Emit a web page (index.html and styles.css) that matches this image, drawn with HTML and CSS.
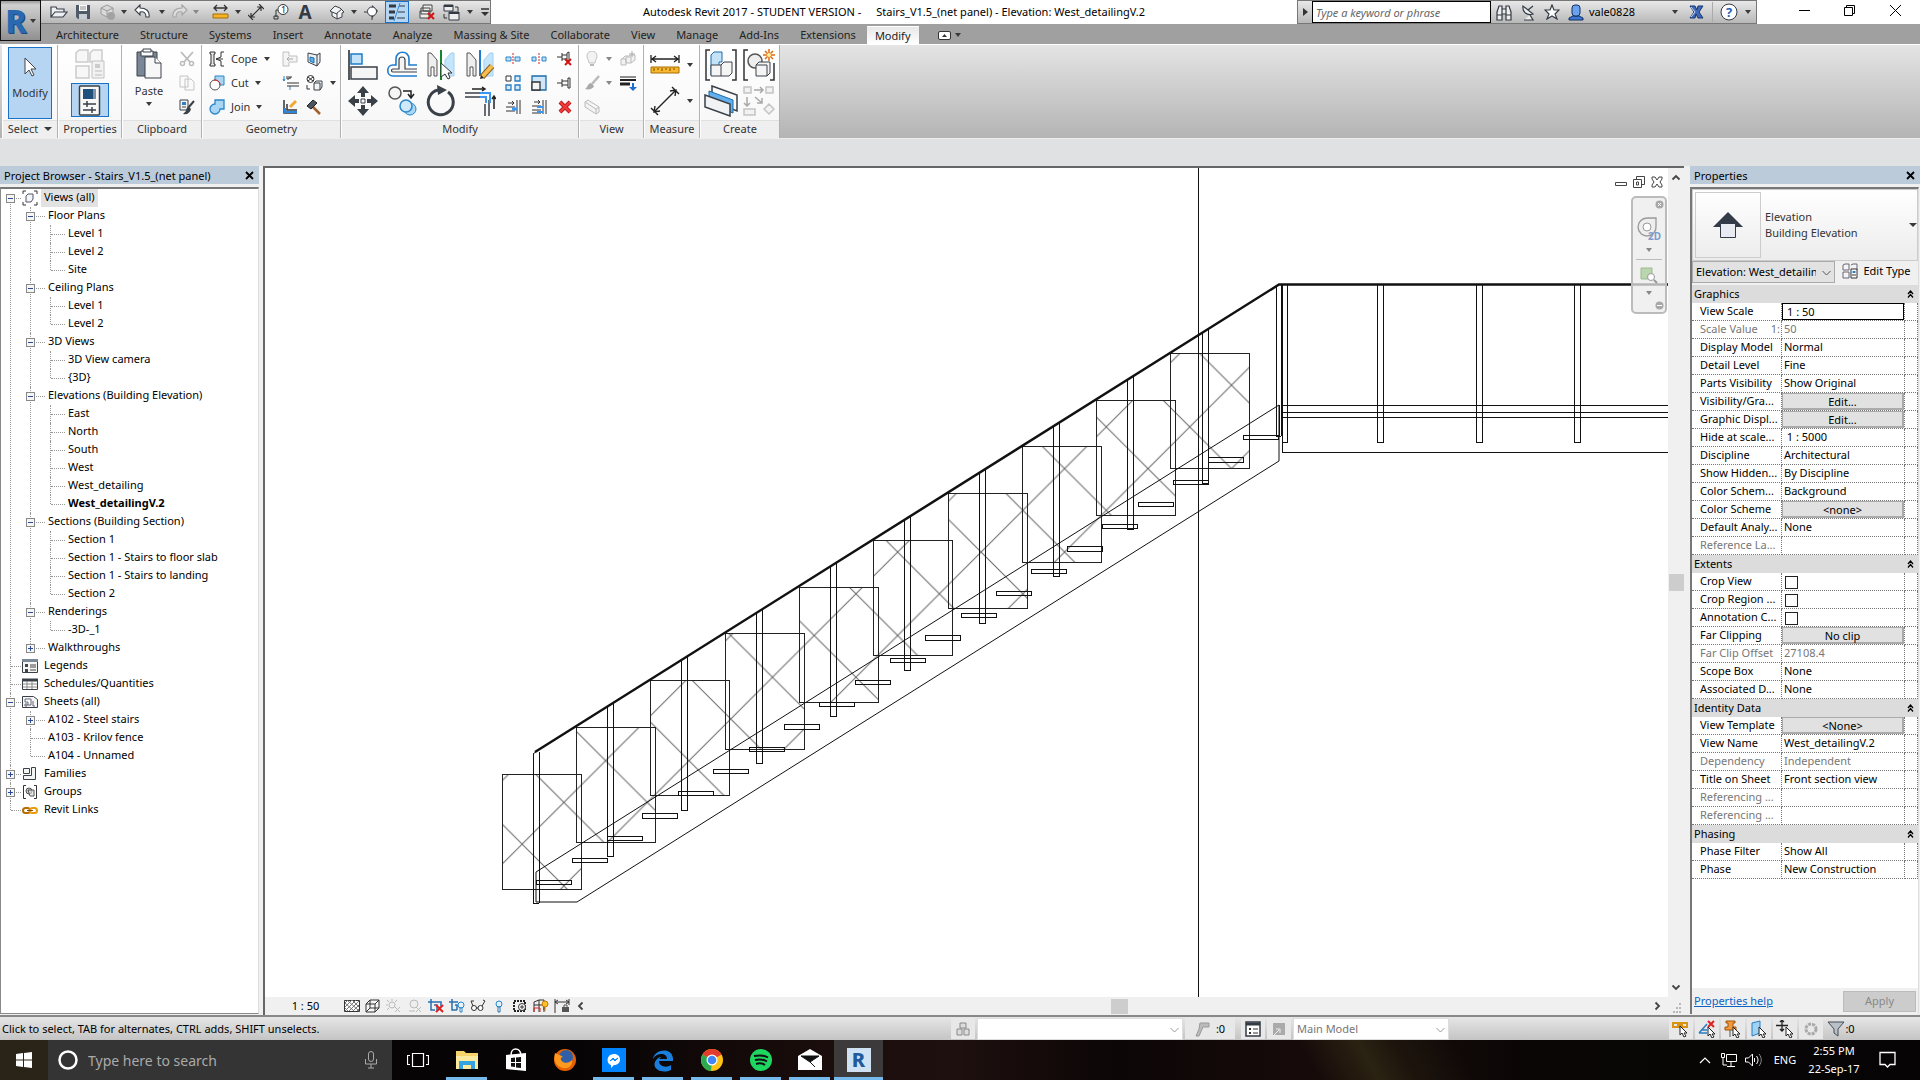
FILE: index.html
```html
<!DOCTYPE html>
<html lang="en">
<head>
<meta charset="utf-8">
<title>Autodesk Revit 2017</title>
<link rel="stylesheet" href="styles.css">
</head>
<body>
<div class="app">
<header class="top">
  <button class="appbtn" aria-label="Application menu"><span class="rlogo">R</span><span class="caret"></span></button>
  <div class="topmain">
    <div class="titlebar">
      <div class="qat">
        <button class="i w24" aria-label="Open"><svg width="18" height="16" viewBox="0 0 18 16"><path d="M1 13V3h5l1 2h7v3M1 13l4-5h12l-4 5z" fill="#eef1f4" stroke="#3a4048" stroke-width="1.2"/></svg></button>
        <button class="i w24" aria-label="Save"><svg width="16" height="16" viewBox="0 0 16 16"><path d="M1 1h14v14H3l-2-2z" fill="#505a68"/><path d="M4 1h8v6H4z" fill="#fff"/><path d="M4 10h8v5H4z" fill="#c7ccd3"/><path d="M5 3h6M5 5h6" stroke="#888"/></svg></button>
        <button class="i w24" aria-label="Synchronize"><svg width="17" height="17" viewBox="0 0 17 17"><path d="M8 1l6 3v6l-6 3-6-3V4zM2 4l6 3 6-3M8 7v6" fill="#d9d9d9" stroke="#9a9a9a"/><circle cx="12" cy="12" r="4" fill="#a2a2a2"/></svg></button>
        <span class="w10"><span class="caret"></span></span>
        <button class="i w28" aria-label="Undo"><svg width="18" height="16" viewBox="0 0 18 16"><path d="M6 1L1 6l5 5V8c4-1 6 1 6 5h3c1-6-3-9-9-9z" fill="#fff" stroke="#3a4048" stroke-width="1.1"/></svg></button>
        <span class="w10"><span class="caret"></span></span>
        <button class="i w24" aria-label="Redo"><svg width="18" height="16" viewBox="0 0 18 16"><path d="M12 1l5 5-5 5V8c-4-1-6 1-6 5H3c-1-6 3-9 9-9z" fill="#ddd" stroke="#a4a4a4" stroke-width="1.1"/></svg></button>
        <span class="w10"><span class="caret dim"></span></span>
        <i class="sep"></i>
        <button class="i w24" aria-label="Measure"><svg width="18" height="16" viewBox="0 0 18 16"><path d="M2 4h13M5 1L2 4l3 3M12 1l3 3-3 3" stroke="#333" fill="none" stroke-width="1.3"/><path d="M1 10h15v4H1z" fill="#f5b32a" stroke="#a86d00"/></svg></button>
        <span class="w10"><span class="caret"></span></span>
        <button class="i w26" aria-label="Aligned dimension"><svg width="16" height="16" viewBox="0 0 16 16"><path d="M3 13L13 3M3 9v4h4M9 3h4v4M0 11l5 5M11 0l5 5" stroke="#333" fill="none" stroke-width="1.2"/></svg></button>
        <button class="i w24" aria-label="Tag"><svg width="16" height="16" viewBox="0 0 16 16"><circle cx="10" cy="5.500" r="5" fill="#fff" stroke="#333"/><path d="M5 6H3v7M1 15h4v-3H1z" fill="none" stroke="#333"/><text x="8" y="9" font-size="9" fill="#222">1</text></svg></button>
        <button class="i w24 bigA" aria-label="Text">A</button>
        <i class="sep"></i>
        <button class="i w24" aria-label="Default 3D view"><svg width="16" height="16" viewBox="0 0 16 16"><path d="M1 7l5-5 5 2 4 4-2 1v4l-5 2-5-3V8z" fill="#f2f2f2" stroke="#3a4048"/><path d="M8 15V9l5-4M3 8l5 2" stroke="#3a4048" fill="none"/></svg></button>
        <span class="w10"><span class="caret"></span></span>
        <button class="i w26" aria-label="Section"><svg width="16" height="16" viewBox="0 0 16 16"><path d="M8 1l6 6-6 7z" fill="#333a44"/><circle cx="8" cy="7.500" r="4.500" fill="#fff" stroke="#333a44"/><path d="M8 12v4M0 8h3" stroke="#333a44"/></svg></button>
        <button class="i w24 on" aria-label="Thin lines"><svg width="18" height="18" viewBox="0 0 18 18"><path d="M1 3h7M1 9h6M1 15h5" stroke="#333a44" stroke-width="3"/><path d="M11 3h6M10 9h7M9 15h8" stroke="#333a44"/><path d="M12 0L6 18" stroke="#2e8bde"/></svg></button>
        <i class="sep"></i>
        <button class="i w20" aria-label="Close hidden windows"><svg width="17" height="16" viewBox="0 0 17 16"><path d="M4 1h9v6H4zM2 4h9v6H2zM1 7h9v7H1z" fill="#eee" stroke="#444"/><path d="M9 9l6 6M15 9l-6 6" stroke="#d21414" stroke-width="2"/></svg></button>
        <button class="i w28" aria-label="Switch windows"><svg width="17" height="17" viewBox="0 0 17 17"><path d="M1 1h9v6H1zM6 8h10v8H6z" fill="#eee" stroke="#333a44"/><path d="M6 9h10M1 2h9" stroke="#333a44" stroke-width="2"/><path d="M12 3h3v4M1 10v4h3" stroke="#333" fill="none"/></svg></button>
        <span class="w10"><span class="caret"></span></span>
        <button class="i w20" aria-label="Customize toolbar"><svg width="10" height="8" viewBox="0 0 10 8"><path d="M1 1h8" stroke="#333" stroke-width="1.500"/><path d="M1 4h8L5 8z" fill="#333"/></svg></button>
      </div>
      <div class="title"><span>Autodesk Revit 2017 - STUDENT VERSION -</span><span>Stairs_V1.5_(net panel) - Elevation: West_detailingV.2</span></div>
      <div class="info">
        <button class="i w14" aria-label="Collapse search"><svg width="5" height="8" viewBox="0 0 5 8"><path d="M0 0l5 4-5 4z" fill="#333"/></svg></button>
        <input class="search" type="text" placeholder="Type a keyword or phrase" aria-label="Search help">
        <button class="i w24" aria-label="Search"><svg width="16" height="17" viewBox="0 0 16 17"><path d="M1 8l2-6h3v14H1zM15 8l-2-6h-3v14h5zM6 5h4v5H6zM1 11h5M10 11h5" fill="#eee" stroke="#333a44" stroke-width="1.200"/></svg></button>
        <button class="i w24" aria-label="Subscription"><svg width="15" height="17" viewBox="0 0 15 17"><path d="M2 2c-1 6 4 10 10 8zM7 6l5-4M3 16h9l-3-5" fill="#eee" stroke="#333a44" stroke-width="1.200"/></svg></button>
        <button class="i w24" aria-label="Favorites"><svg width="16" height="16" viewBox="0 0 16 16"><path d="M8 1l2 5h5l-4 4 2 5-5-3-5 3 2-5-4-4h5z" fill="#fff" stroke="#333a44" stroke-width="1.200"/></svg></button>
        <button class="i user"><svg width="16" height="17" viewBox="0 0 16 17"><path d="M1 16v-2l4-2h6l4 2v2z" fill="#3d78d6" stroke="#12305f"/><rect x="4" y="1" width="8" height="11" rx="3" fill="#6aa2f2" stroke="#12305f"/></svg>vale0828<span class="caret"></span></button>
        <button class="i w28" aria-label="Exchange apps"><svg width="15" height="14" viewBox="0 0 15 14"><path d="M1 1h5l2 4 1-4h5l-4 6 4 6H9L7 9l-1 4H1l4-6z" fill="#3f68b8" stroke="#17366f"/><path d="M2 2l4 5-4 5" stroke="#cfe0f8" fill="none"/></svg></button>
        <i class="sep tight"></i>
        <button class="i w28" aria-label="Help"><svg width="18" height="18" viewBox="0 0 18 18"><circle cx="9" cy="9" r="8" fill="#fff" stroke="#333a44"/><text x="6" y="14" font-size="13" font-weight="700" fill="#1f64b8">?</text></svg></button>
        <span class="w10"><span class="caret"></span></span>
      </div>
      <div class="winbtns">
        <button class="i" aria-label="Minimize"><svg width="11" height="11" viewBox="0 0 11 11"><path d="M0 5.500h11" stroke="#000"/></svg></button>
        <button class="i" aria-label="Restore"><svg width="11" height="11" viewBox="0 0 11 11"><path d="M.5 2.500h8v8h-8zM2.500 2.500v-2h8v8h-2" fill="none" stroke="#000"/></svg></button>
        <button class="i" aria-label="Close"><svg width="11" height="11" viewBox="0 0 11 11"><path d="M0 0l11 11M11 0L0 11" stroke="#000"/></svg></button>
      </div>
    </div>
    <nav class="tabs">
      <button>Architecture</button><button>Structure</button><button>Systems</button><button>Insert</button><button>Annotate</button><button>Analyze</button><button>Massing &amp; Site</button><button>Collaborate</button><button>View</button><button>Manage</button><button>Add-Ins</button><button>Extensions</button><button class="active">Modify</button>
      <button class="ribtoggle" aria-label="Minimize ribbon"><svg width="13" height="9" viewBox="0 0 13 9"><rect x=".5" y=".5" width="12" height="8" rx="1.500" fill="#fff" stroke="#333"/><path d="M4 6l2.500-3L9 6z" fill="#333"/></svg><span class="caret"></span></button>
    </nav>
  </div>
</header>

<section class="ribbon">
  <div class="panel p-select">
    <div class="body"><button class="tall on"><svg width="14" height="22" viewBox="0 0 14 22"><path d="M2 2v16l4-4 3 6 2-1-3-6h5z" fill="#fff" stroke="#444"/></svg><span>Modify</span></button></div>
    <div class="label">Select <span class="caret big"></span></div>
  </div>
  <div class="panel p-props">
    <div class="body two">
      <button class="i" aria-label="Type properties"><svg width="32" height="32" viewBox="0 0 32 32"><path d="M2 5l3-3h9v12H2zM16 5l3-3h9v12H16zM2 18h13v12H2z" fill="#f7f7f7" stroke="#ccc" stroke-width="1.500"/><path d="M18 13h12v17H18z" fill="#f2f2f2" stroke="#c2c2c2"/><path d="M21 16h5v4h-5z" fill="#ccc"/><path d="M21 23h7M21 27h7" stroke="#bbb"/></svg></button>
      <button class="i on" aria-label="Properties"><svg width="24" height="31" viewBox="0 0 24 31"><rect x="1.500" y="1" width="20" height="29" rx="1" fill="#f8f8f8" stroke="#3a4048" stroke-width="1.500"/><path d="M5 4h10v10H5z" fill="#20507c"/><path d="M15 4h3v10h-3z" fill="#7b93aa"/><path d="M5 19h13M5 25h13M9 16v6M14 22v6" stroke="#3a4048" stroke-width="1.500"/></svg></button>
    </div>
    <div class="label">Properties</div>
  </div>
  <div class="panel p-clip">
    <div class="body row">
      <button class="paste"><svg width="28" height="32" viewBox="0 0 28 32"><path d="M2 4h20v24H2z" fill="#7a8796" stroke="#3a4048"/><path d="M6 3h12v5H6z" fill="#fff" stroke="#3a4048"/><path d="M8 1h8v3H8z" fill="#fff" stroke="#3a4048"/><path d="M10 9h10l6 6v15H10z" fill="#f7f7f7" stroke="#3a4048"/><path d="M20 9v6h6" fill="#fff" stroke="#3a4048"/></svg><span>Paste</span><span class="caret"></span></button>
      <div class="three">
        <button class="i" aria-label="Cut"><svg width="16" height="16" viewBox="0 0 16 16"><path d="M2 1l9 10M14 1L5 11" stroke="#bbb" stroke-width="1.800"/><circle cx="3.500" cy="12.500" r="2" fill="none" stroke="#bbb" stroke-width="1.500"/><circle cx="12.500" cy="12.500" r="2" fill="none" stroke="#bbb" stroke-width="1.500"/></svg></button>
        <button class="i" aria-label="Copy"><svg width="16" height="16" viewBox="0 0 16 16"><path d="M1 1h8v11H1zM6 4h6l3 3v8H6z" fill="#fafafa" stroke="#c4c4c4"/></svg></button>
        <button class="i" aria-label="Match type"><svg width="16" height="16" viewBox="0 0 16 16"><path d="M1 1h8v10H1z" fill="#f4f4f4" stroke="#3a4048"/><path d="M3 3h4v3H3z" fill="#2f7fc4"/><path d="M3 8h4" stroke="#3a4048"/><path d="M15 2l-6 7" stroke="#3a4048" stroke-width="2"/><path d="M10 8c-2 0-3 2-3 4l-3 3c4 1 7-1 8-5z" fill="#3a4048"/></svg></button>
      </div>
    </div>
    <div class="label">Clipboard</div>
  </div>
  <div class="panel p-geom">
    <div class="body row">
      <div class="three texts">
        <button class="i"><svg width="16" height="16" viewBox="0 0 16 16"><path d="M1 1h5v2H5v10h1v2H1v-2h1V3H1z" fill="#e6e6e6" stroke="#333"/><path d="M15 1h-3v5l-5 2 5 2v5h3M7 8h7" fill="none" stroke="#333"/></svg>Cope<span class="caret"></span></button>
        <button class="i"><svg width="16" height="16" viewBox="0 0 16 16"><path d="M6 1h9v9H6z" fill="#a9d6f5" stroke="#2a86c8"/><circle cx="6" cy="10" r="5" fill="#fff" stroke="#555"/><path d="M5 5c4 0 6 2 6 5" stroke="#d22" fill="none"/></svg>Cut<span class="caret"></span></button>
        <button class="i"><svg width="16" height="16" viewBox="0 0 16 16"><path d="M6 1h9v9h-4a5 5 0 1 1-5-5z" fill="#a9d6f5" stroke="#2a86c8" stroke-width="1.300"/></svg>Join<span class="caret"></span></button>
      </div>
      <div class="three">
        <button class="i" aria-label="Join end cut"><svg width="16" height="16" viewBox="0 0 16 16"><path d="M1 1h6v4h8v6H7v4H1z" fill="#f4f4f4" stroke="#c0c0c0"/><path d="M5 8h6M7 6L5 8l2 2" stroke="#aaa" fill="none"/></svg></button>
        <button class="i" aria-label="Wall joins"><svg width="17" height="16" viewBox="0 0 17 16"><path d="M2 1v5M1 4l1 2 1-2M8 11v4" stroke="#2a86c8" fill="none"/><path d="M5 1v3h2V1M7 3h2V1M5 8h12M5 11h12" stroke="#333" fill="none"/></svg></button>
        <button class="i" aria-label="Split face"><svg width="16" height="16" viewBox="0 0 16 16"><path d="M2 1v13h13M5 5v6h10" fill="none" stroke="#333" stroke-width="1.500"/><path d="M3 9v4h12" fill="none" stroke="#2a86e0" stroke-width="2"/><path d="M14 2L8 8" stroke="#f0a838" stroke-width="3"/></svg></button>
      </div>
      <div class="three">
        <button class="i" aria-label="Paint"><svg width="16" height="16" viewBox="0 0 16 16"><path d="M2 2l9 2v11l-9-4zM11 4l3-2v9l-3 4" fill="#eef2f5" stroke="#3a4048"/><path d="M4 6l4 1v5l-4-2z" fill="#5fb0ea" stroke="#1870b8"/></svg></button>
        <button class="i" aria-label="Beam joins"><svg width="17" height="16" viewBox="0 0 17 16"><circle cx="4.500" cy="4" r="3.500" fill="#fff" stroke="#333"/><path d="M2 2l5 4M7 2L2 6M1 10v4h3" stroke="#333" fill="none"/><path d="M8 8l2-2h6v6l-2 3H8zM8 8h6v7" fill="#f2f2f2" stroke="#3a4048"/></svg></button>
        <button class="i" aria-label="Demolish"><svg width="16" height="16" viewBox="0 0 16 16"><path d="M6 7l8 8" stroke="#a0612e" stroke-width="2.500"/><path d="M1 7l6-6 4 3-6 6z" fill="#4b5460" stroke="#222"/></svg></button>
      </div>
      <div class="three arrows"><span></span><span class="caret"></span><span></span></div>
    </div>
    <div class="label">Geometry</div>
  </div>
  <div class="panel p-modify">
    <div class="body row">
      <div class="bigs">
        <button class="i" aria-label="Align"><svg width="32" height="32" viewBox="0 0 32 32"><path d="M2 1v30" stroke="#222" stroke-width="1.500"/><path d="M4 5h11v10H4z" fill="#c5e3f8" stroke="#1d7cc8" stroke-width="1.500"/><path d="M4 18h26v12H4z" fill="#f5f5f5" stroke="#3a4048" stroke-width="1.500"/></svg></button>
        <button class="i" aria-label="Offset"><svg width="32" height="32" viewBox="0 0 32 32"><path d="M31 16h-8V10c0-9-13-9-13 0v6H7c-7 0-7 11 0 11h24" fill="none" stroke="#1d7cd0" stroke-width="1.600"/><path d="M31 20H19v-9c0-4-6-4-6 0v9H7c-2 0-2 3 0 3h24" fill="#f4f4f4" stroke="#3a4048" stroke-width="1.200"/></svg></button>
        <button class="i" aria-label="Mirror pick axis"><svg width="32" height="32" viewBox="0 0 32 32"><path d="M3 4h3l6 7v16H9v-9H6v9H3z" fill="#eee" stroke="#555"/><path d="M29 4h-3l-6 7v16h9z" fill="#c5e6fa" stroke="#9fd0f0"/><path d="M16 1v30" stroke="#16852c" stroke-width="2"/><path d="M16 14v14l4-3 3 5 2-1-2-5h4z" fill="#fff" stroke="#333"/></svg></button>
        <button class="i" aria-label="Mirror draw axis"><svg width="32" height="32" viewBox="0 0 32 32"><path d="M3 4h3l6 7v16H9v-9H6v9H3z" fill="#eee" stroke="#555"/><path d="M29 4h-3l-6 7v16h9z" fill="#c5e6fa" stroke="#9fd0f0"/><path d="M16 1v26" stroke="#1d7cd0" stroke-width="2"/><path d="M28 17L18 28" stroke="#8a5b1c" stroke-width="6"/><path d="M28 17L18 28" stroke="#f8bd50" stroke-width="4"/><path d="M16 30l1-4 3 3z" fill="#222"/></svg></button>
        <button class="i" aria-label="Move"><svg width="32" height="32" viewBox="0 0 32 32"><path d="M16 1l6 7h-4v4h-4V8h-4zM16 31l6-7h-4v-4h-4v4h-4zM1 16l7-6v4h4v4H8v4zM31 16l-7-6v4h-4v4h4v4z" fill="#3a4048"/><path d="M14 14h4v4h-4z" fill="#fff" stroke="#3a4048"/></svg></button>
        <button class="i" aria-label="Copy element"><svg width="32" height="32" viewBox="0 0 32 32"><circle cx="9" cy="8" r="6" fill="#f5f5f5" stroke="#555" stroke-width="1.500"/><path d="M17 6h8v6M22 9l3 4 3-4" fill="none" stroke="#222" stroke-width="1.500"/><circle cx="24" cy="24" r="6" fill="#a9d6f5" stroke="#2a86c8"/><circle cx="20" cy="21" r="6" fill="#cfe8fa" stroke="#2a86c8" stroke-width="1.500"/></svg></button>
        <button class="i" aria-label="Rotate"><svg width="32" height="32" viewBox="0 0 32 32"><path d="M23 7a12.500 12.500 0 1 1-10-2" fill="none" stroke="#3a4048" stroke-width="3"/><path d="M12 0l10 5-9 5z" fill="#3a4048"/></svg></button>
        <button class="i" aria-label="Trim to corner"><svg width="32" height="32" viewBox="0 0 32 32"><path d="M1 8h15M1 12h15M21 19v12M25 15v16" stroke="#3a4048" stroke-width="1.500"/><path d="M16 8h10v10M16 12h6v6" fill="none" stroke="#3a96f0" stroke-width="2"/><path d="M8 4h13M18 2l3 2-3 2M30 24V11M28 14l2-3 2 3" fill="none" stroke="#222" stroke-width="1.500"/></svg></button>
      </div>
      <div class="smalls">
        <button class="i" aria-label="Split element"><svg width="16" height="16" viewBox="0 0 16 16"><path d="M1 6h5v4H1zM10 6h5v4h-5z" fill="#bfe0f7" stroke="#2a86c8"/><path d="M8 2v12" stroke="#d22" stroke-dasharray="2 1"/></svg></button>
        <button class="i" aria-label="Split with gap"><svg width="16" height="16" viewBox="0 0 16 16"><path d="M1 6h4v4H1zM11 6h4v4h-4z" fill="#bfe0f7" stroke="#2a86c8"/><path d="M8 2v12" stroke="#d22" stroke-dasharray="2 1"/></svg></button>
        <button class="i" aria-label="Unpin"><svg width="16" height="16" viewBox="0 0 16 16"><path d="M0 6h5M5 2v8M5 4h5M5 8h5M10 2v8h2V1z" fill="#fff" stroke="#333"/><path d="M8 8l6 6M14 8l-6 6" stroke="#d21414" stroke-width="2"/></svg></button>
        <button class="i" aria-label="Array"><svg width="16" height="16" viewBox="0 0 16 16"><path d="M1 1h5v5H1z" fill="#fff" stroke="#333"/><path d="M10 1h5v5h-5zM1 10h5v5H1zM10 10h5v5h-5z" fill="#d6ecfb" stroke="#2a7cc0" stroke-width="1.300"/></svg></button>
        <button class="i" aria-label="Scale"><svg width="16" height="16" viewBox="0 0 16 16"><path d="M1 1h14v14H1z" fill="#cfe6f8" stroke="#1d6ca8" stroke-width="1.300"/><path d="M1 7h8v8H1z" fill="#f5f5f5" stroke="#333" stroke-width="1.300"/></svg></button>
        <button class="i" aria-label="Pin"><svg width="16" height="16" viewBox="0 0 16 16"><path d="M0 8h5M5 4v8M5 6h6M5 10h6M11 3v10h2V3z" fill="#fff" stroke="#333"/></svg></button>
        <button class="i" aria-label="Trim single"><svg width="16" height="16" viewBox="0 0 16 16"><path d="M1 8h9M1 12h9M12 1v14M15 1v14M3 4h6M7 2l2 2-2 2" stroke="#333" fill="none"/><path d="M7 10h5" stroke="#3a96f0" stroke-width="3"/></svg></button>
        <button class="i" aria-label="Trim multiple"><svg width="16" height="16" viewBox="0 0 16 16"><path d="M1 7h9M1 11h9M1 14h9M12 1v14M15 1v14M3 3h6M7 1l2 2-2 2" stroke="#333" fill="none"/><path d="M6 8h6M6 13h6" stroke="#3a96f0" stroke-width="2"/></svg></button>
        <button class="i" aria-label="Delete"><svg width="14" height="14" viewBox="0 0 14 14"><path d="M2 2l10 10M12 2L2 12" stroke="#a81010" stroke-width="4"/><path d="M2 2l10 10M12 2L2 12" stroke="#f03a3a" stroke-width="2.500"/></svg></button>
      </div>
    </div>
    <div class="label">Modify</div>
  </div>
  <div class="panel p-view">
    <div class="body row">
      <div class="three">
        <button class="i" aria-label="Hide in view"><svg width="16" height="16" viewBox="0 0 16 16"><path d="M5 12C5 9 3 8 3 5a5 5 0 0 1 10 0c0 3-2 4-2 7z" fill="#f2f2f2" stroke="#c2c2c2"/><path d="M6 14h4" stroke="#bbb" stroke-width="2"/></svg></button>
        <button class="i" aria-label="Override graphics"><svg width="16" height="16" viewBox="0 0 16 16"><path d="M15 1L8 9" stroke="#bbb" stroke-width="2.500"/><path d="M7 8c-3 0-3 4-6 6 4 1 8 0 9-3z" fill="#aaa"/></svg></button>
        <button class="i" aria-label="Section box"><svg width="16" height="16" viewBox="0 0 16 16"><path d="M1 3l3-2 11 7v5l-3 2L1 8zM1 3l11 7 3-2M12 10v5" fill="#f2f2f2" stroke="#bbb"/></svg></button>
      </div>
      <div class="three arrows"><span class="caret dim"></span><span class="caret dim"></span><span></span></div>
      <div class="three">
        <button class="i" aria-label="Linework"><svg width="16" height="16" viewBox="0 0 16 16"><path d="M1 8h5v6H1zM6 6h5v6H6zM2 8l3-3h4l2-1h4v5l-4 3" fill="#f2f2f2" stroke="#bbb"/><path d="M12 0v6M9 3h6" stroke="#aaa"/></svg></button>
        <button class="i" aria-label="Line weight"><svg width="17" height="16" viewBox="0 0 17 16"><path d="M0 2h16" stroke="#222"/><path d="M0 5h16" stroke="#222" stroke-width="2"/><path d="M0 9h10" stroke="#222" stroke-width="3"/><path d="M12 8v4H9l4 4 4-4h-3V8z" fill="#1d6fd0"/></svg></button>
        <span></span>
      </div>
    </div>
    <div class="label">View</div>
  </div>
  <div class="panel p-measure">
    <div class="body row">
      <div class="two">
        <button class="i" aria-label="Measure distance"><svg width="30" height="28" viewBox="0 0 30 28"><path d="M2 8h26M6 5L2 8l4 3M24 5l4 3-4 3M1 4v8M29 4v8" stroke="#222" stroke-width="1.300" fill="none"/><path d="M1 16h28v6H1z" fill="#f8b830" stroke="#a86d00"/><path d="M4 17v3M8 17v2M12 17v3M16 17v2M20 17v3M24 17v2" stroke="#7a4c00"/></svg></button>
        <button class="i" aria-label="Dimension"><svg width="30" height="30" viewBox="0 0 30 30"><path d="M4 26L26 4M5 20l-1 6 6-1M20 5l6-1-1 6M1 22l7 7M22 1l7 7" stroke="#222" stroke-width="1.400" fill="none"/></svg></button>
      </div>
      <div class="two arrows"><span class="caret"></span><span class="caret"></span></div>
    </div>
    <div class="label">Measure</div>
  </div>
  <div class="panel p-create">
    <div class="body bigs">
      <button class="i" aria-label="Create assembly"><svg width="32" height="32" viewBox="0 0 32 32"><path d="M5 1H1v30h4M27 1h4v30h-4" fill="none" stroke="#333" stroke-width="1.500"/><path d="M6 6l3-3h8v10h-3v13H6z" fill="#c5e3f8" stroke="#1d6ca8"/><path d="M6 16h10l3-3h8v11l-3 3H6zM16 16v11" fill="#f5f5f5" stroke="#3a4048"/></svg></button>
      <button class="i" aria-label="Create group"><svg width="32" height="32" viewBox="0 0 32 32"><path d="M5 1H1v30h4M27 31h4V14" fill="none" stroke="#333" stroke-width="1.500"/><circle cx="12" cy="12" r="7" fill="#eee" stroke="#555" stroke-width="1.500"/><path d="M13 16l3-3h11v11l-3 3H13zM13 16h11v11" fill="#f5f5f5" stroke="#3a4048"/><path d="M26 0v12M20 6h12M22 2l8 8M30 2l-8 8" stroke="#e06a10" stroke-width="1.500"/><circle cx="26" cy="6" r="2" fill="#fff3a0"/></svg></button>
      <button class="i" aria-label="Create parts"><svg width="34" height="32" viewBox="0 0 34 32"><path d="M8 1l25 9v16L8 16z" fill="#fafafa" stroke="#3a4048" stroke-width="1.500"/><path d="M5 6l24 9v13L5 18z" fill="#62b0ee" stroke="#1d6ca8"/><path d="M1 10l25 9v12L1 22z" fill="#f0f2f4" stroke="#3a4048" stroke-width="1.500"/></svg></button>
      <button class="i" aria-label="Create similar"><svg width="32" height="32" viewBox="0 0 32 32"><path d="M1 2h7v6H1zM23 2h7v6h-7zM1 24h11v6H1zM26 19l5 5-5 5-5-5z" fill="#f2f2f2" stroke="#c4c4c4" stroke-width="1.500"/><path d="M11 5h9M17 2l3 3-3 3M4 12v9M1 18l3 3 3-3M12 12l7 6M19 13v5h-5" fill="none" stroke="#a8a8a8" stroke-width="1.500"/></svg></button>
    </div>
    <div class="label">Create</div>
  </div>
</section>
<div class="optbar"></div>

<main class="work">
  <aside class="browser">
    <h2 class="dockhead">Project Browser - Stairs_V1.5_(net panel)<button class="i x" aria-label="Close browser"><svg width="9" height="9" viewBox="0 0 9 9"><path d="M1 1l7 7M8 1L1 8" stroke="#000" stroke-width="1.800"/></svg></button></h2>
    <ul class="tree root">
      <li><div class="r"><button class="tg minus" aria-label="Collapse"></button><svg width="16" height="16" viewBox="0 0 16 16"><path d="M4 1H1v3M12 1h3v3M4 15H1v-3M12 15h3v-3" fill="none" stroke="#333"/><path d="M4 6l2-2h5v5l-2 3H4z" fill="#f2f5fa" stroke="#556"/></svg><span class="sel">Views (all)</span></div>
        <ul class="tree">
          <li><div class="r"><button class="tg minus" aria-label="Collapse"></button>Floor Plans</div><ul class="tree"><li><div class="r">Level 1</div></li><li><div class="r">Level 2</div></li><li><div class="r">Site</div></li></ul></li>
          <li><div class="r"><button class="tg minus" aria-label="Collapse"></button>Ceiling Plans</div><ul class="tree"><li><div class="r">Level 1</div></li><li><div class="r">Level 2</div></li></ul></li>
          <li><div class="r"><button class="tg minus" aria-label="Collapse"></button>3D Views</div><ul class="tree"><li><div class="r">3D View camera</div></li><li><div class="r">{3D}</div></li></ul></li>
          <li><div class="r"><button class="tg minus" aria-label="Collapse"></button>Elevations (Building Elevation)</div><ul class="tree"><li><div class="r">East</div></li><li><div class="r">North</div></li><li><div class="r">South</div></li><li><div class="r">West</div></li><li><div class="r">West_detailing</div></li><li><div class="r"><b>West_detailingV.2</b></div></li></ul></li>
          <li><div class="r"><button class="tg minus" aria-label="Collapse"></button>Sections (Building Section)</div><ul class="tree"><li><div class="r">Section 1</div></li><li><div class="r">Section 1 - Stairs to floor slab</div></li><li><div class="r">Section 1 - Stairs to landing</div></li><li><div class="r">Section 2</div></li></ul></li>
          <li><div class="r"><button class="tg minus" aria-label="Collapse"></button>Renderings</div><ul class="tree"><li><div class="r">-3D-_1</div></li></ul></li>
          <li><div class="r"><button class="tg" aria-label="Expand"></button>Walkthroughs</div></li>
        </ul></li>
      <li><div class="r"><svg width="16" height="16" viewBox="0 0 16 16"><path d="M.5 1.500h15v13H.5z" fill="#f5f5f5" stroke="#3a4048"/><path d="M0 2.500h16" stroke="#7b8896" stroke-width="3"/><path d="M3 6h3v3H3zM3 11h3v3H3z" fill="#444"/><path d="M8 7h6M8 9h6M8 12h6" stroke="#444"/></svg><span>Legends</span></div></li>
      <li><div class="r"><svg width="16" height="16" viewBox="0 0 16 16"><path d="M.5 3.500h15v10H.5z" fill="#fff" stroke="#3a4048"/><path d="M0 4h16" stroke="#3a4048" stroke-width="3"/><path d="M1 8h14M1 11h14M5 5v8M10 5v8" stroke="#888"/></svg><span>Schedules/Quantities</span></div></li>
      <li><div class="r"><button class="tg minus" aria-label="Collapse"></button><svg width="16" height="16" viewBox="0 0 16 16"><path d="M.5 2.500h11l4 3v8H.5z" fill="#f5f5f5" stroke="#3a4048"/><path d="M3 5h6v6H6V8H3zM3 10h2v2H3zM11 7v5h2" fill="#fff" stroke="#667"/></svg><span>Sheets (all)</span></div>
        <ul class="tree"><li><div class="r"><button class="tg" aria-label="Expand"></button>A102 - Steel stairs</div></li><li><div class="r">A103 - Krilov fence</div></li><li><div class="r">A104 - Unnamed</div></li></ul></li>
      <li><div class="r"><button class="tg" aria-label="Expand"></button><svg width="16" height="16" viewBox="0 0 16 16"><path d="M1.500 2.500h6v5h-6zM9.500 1.500h4v12h-12v-4h8z" fill="#f5f5f5" stroke="#3a4048"/></svg><span>Families</span></div></li>
      <li><div class="r"><button class="tg" aria-label="Expand"></button><svg width="16" height="16" viewBox="0 0 16 16"><path d="M4 1.500H1.500v13H4M12 1.500h2.500v13H12" fill="none" stroke="#333"/><circle cx="7" cy="7" r="3" fill="#ccc" stroke="#555"/><path d="M6 6h6v6H8z" fill="#ddd" stroke="#555" fill-opacity=".6"/></svg><span>Groups</span></div></li>
      <li><div class="r"><svg width="16" height="16" viewBox="0 0 16 16"><rect x="1" y="6" width="7" height="5" rx="2.500" fill="none" stroke="#b86c00" stroke-width="2"/><rect x="8" y="6" width="7" height="5" rx="2.500" fill="none" stroke="#e89a10" stroke-width="2"/><path d="M5 8.500h6" stroke="#8a5000"/></svg><span>Revit Links</span></div></li>
    </ul>
  </aside>

  <section class="viewport">
    <div class="canvasrow">
      <div class="canvas">
        <svg class="drawing" viewBox="265 168 1403 829" role="img" aria-label="Stair elevation">
          <defs><pattern id="hatch" x="522.150" y="844.150" width="83.450" height="83.450" patternUnits="userSpaceOnUse"><path d="M0 0L83.450 83.450M83.450 0L0 83.450" stroke="#606060" stroke-width="1"/></pattern></defs>
          <path class="panels" d="M502 774h79v115h-79zM576 727h79v115h-79zM650 680h79v115h-79zM725 633h79v116h-79zM799 587h79v115h-79zM873 540h79v115h-79zM948 493h79v115h-79zM1022 446h79v116h-79zM1096 400h79v115h-79zM1170 353h79v115h-79z"/>
          <path class="crisp" d="M533 903V754M539 903V752M533 903h6M607 706V856h6V703M681 659V810h6V656M756 612V763h6V609M830 566V716h6V563M904 519V670h6V516M979 472V623h6V469M1053 425V576h6V422M1127 379V529h6V376M1202 332V483h6V328"/>
          <path class="crisp" d="M536 880h35v4h-35zM572 858h35v4h-35zM607 836h35v4h-35zM642 813h35v5h-35zM678 791h35v4h-35zM713 769h35v4h-35zM749 747h35v4h-35zM784 724h35v5h-35zM819 702h35v4h-35zM855 680h35v4h-35zM890 658h35v4h-35zM925 635h35v5h-35zM961 613h35v4h-35zM996 591h35v4h-35zM1031 569h35v4h-35zM1067 546h35v5h-35zM1102 524h35v4h-35zM1138 502h35v4h-35zM1173 480h35v4h-35zM1208 457h35v5h-35zM1243 435h35v4h-35z"/>
          <path class="thin" d="M536 902V872L1279 405V461L577 902H536M533 754L537 751"/>
          <path class="rail" d="M535 752L1279 284.500H1668"/>
          <path class="crisp" d="M1198 168V997M1276 285V436h5M1281 285V436M1279 405V436M1282 285V442h5V285M1377 285V442h6V285M1476 285V442h6V285M1574 285V442h6V285M1282 405H1668M1282 412H1668M1282 417H1668M1282 405V452H1668"/>
        </svg>
        <div class="mdi">
          <button class="i" aria-label="Minimize view"><svg width="12" height="12" viewBox="0 0 12 12"><path d="M.5 6.500h11v3H.5z" fill="none" stroke="#444"/></svg></button>
          <button class="i" aria-label="Restore view"><svg width="12" height="12" viewBox="0 0 12 12"><path d="M.5 3.500h8v8h-8zM3.500 3.500v-3h8v8h-3M3.500 6h2v3h-2z" fill="none" stroke="#444"/></svg></button>
          <button class="i" aria-label="Close view"><svg width="12" height="12" viewBox="0 0 12 12"><path d="M1 1h3l2 3 2-3h3v2L9 6l2 3v2H8L6 8l-2 3H1V9l2-3-2-3z" fill="#fff" stroke="#444"/></svg></button>
        </div>
        <div class="navbar">
          <button class="i end" aria-label="Close navigation"><svg width="9" height="9" viewBox="0 0 9 9"><circle cx="4.500" cy="4.500" r="4" fill="#a8a8a8"/><path d="M3 3l3 3M6 3L3 6" stroke="#fff"/></svg></button>
          <button class="i wheel" aria-label="Steering wheel"><svg width="25" height="26" viewBox="0 0 25 26"><path d="M10 2h9v8a9 9 0 1 1-9-8z" fill="#eee" stroke="#999" stroke-width="1.300"/><circle cx="10" cy="11" r="4" fill="#fff" stroke="#999"/><text x="11" y="24" font-size="10" font-weight="700" fill="#7d9ccc">2D</text></svg></button>
          <span class="caret dim"></span>
          <hr>
          <button class="i" aria-label="Zoom"><svg width="18" height="18" viewBox="0 0 18 18"><path d="M1 2h11v11H1z" fill="#b9d6ae" stroke="#9bbb90"/><circle cx="11" cy="11" r="3.500" fill="#fff" stroke="#999"/><path d="M14 14l3 3" stroke="#999" stroke-width="2"/></svg></button>
          <span class="caret dim"></span>
          <button class="i end" aria-label="Navigation options"><svg width="9" height="9" viewBox="0 0 9 9"><circle cx="4.500" cy="4.500" r="4" fill="#a8a8a8"/><path d="M2 4.500h5" stroke="#fff"/></svg></button>
        </div>
      </div>
      <div class="vscroll"><svg width="10" height="7" viewBox="0 0 10 7"><path d="M1.500 5.500L5 2l3.500 3.500" fill="none" stroke="#444" stroke-width="1.800"/></svg><i></i><svg width="10" height="7" viewBox="0 0 10 7"><path d="M1.500 1.500L5 5l3.500-3.500" fill="none" stroke="#444" stroke-width="1.800"/></svg></div>
    </div>
    <div class="viewctl">
      <button class="i scale">1 : 50</button>
      <div class="vicons">
        <button class="i" aria-label="Detail level"><svg width="16" height="14" viewBox="0 0 16 14"><path d="M.5 1.500h15v11H.5z" fill="#fff" stroke="#333"/><path d="M1 4l3-3M1 8l7-7M1 12L12 1M5 12L15 2M9 12l6-6M13 12l2-2M3 1l12 11M8 1l7 7M1 4l9 8M1 9l3 3" stroke="#777"/></svg></button>
        <button class="i" aria-label="Visual style"><svg width="16" height="14" viewBox="0 0 16 14"><path d="M1 5h9v8H1zM1 5l4-4h9v8l-4 4M10 5l4-4M5 1v8h9M5 9l-4 4" fill="#fff" fill-opacity=".5" stroke="#333"/></svg></button>
        <button class="i" aria-label="Sun path"><svg width="16" height="14" viewBox="0 0 16 14"><circle cx="6" cy="6" r="3" fill="none" stroke="#bbb"/><path d="M6 0v2M0 6h2M1 1l2 2M11 1L9 3M1 11l2-2M9 8l5 5M14 8l-5 5" stroke="#bbb"/></svg></button>
        <button class="i" aria-label="Shadows"><svg width="16" height="14" viewBox="0 0 16 14"><circle cx="7" cy="5" r="4" fill="#eee" stroke="#bbb"/><path d="M2 12h6M9 8l5 5M14 8l-5 5" stroke="#bbb"/></svg></button>
        <button class="i" aria-label="Crop view"><svg width="16" height="14" viewBox="0 0 16 14"><path d="M3 0v11h4M0 3h13v4M6 6h3v5" fill="none" stroke="#2a6fb0" stroke-width="1.500"/><path d="M8 6l7 7M15 6l-7 7" stroke="#d22" stroke-width="2"/></svg></button>
        <button class="i" aria-label="Show crop"><svg width="16" height="14" viewBox="0 0 16 14"><path d="M3 0v11h5M0 3h9M6 6h2v5" fill="none" stroke="#2a6fb0" stroke-width="1.500"/><circle cx="12" cy="6" r="3" fill="#e6f4ff" stroke="#2a86c8"/><path d="M11 9h2v4h-2z" fill="#fff" stroke="#2a86c8"/></svg></button>
        <button class="i" aria-label="Temporary hide"><svg width="16" height="14" viewBox="0 0 16 14"><path d="M1 2l2 5M15 2l-3 5M1 2h3M15 2l-2-1M6 9h2" stroke="#333" fill="none"/><circle cx="4" cy="9" r="2.500" fill="#fff" stroke="#333"/><circle cx="10.500" cy="9" r="2.500" fill="#fff" stroke="#333"/></svg></button>
        <button class="i" aria-label="Reveal hidden"><svg width="16" height="14" viewBox="0 0 16 14"><circle cx="8" cy="5" r="3" fill="#dff2ff" stroke="#2a86c8"/><path d="M7 8h2v5H7z" fill="#fff" stroke="#2a6fb0"/></svg></button>
        <button class="i" aria-label="View properties"><svg width="16" height="14" viewBox="0 0 16 14"><path d="M2 2h11v10H2z" fill="none" stroke="#222" stroke-width="2" stroke-dasharray="2 1"/><circle cx="10" cy="8" r="3.500" fill="#fff" stroke="#333"/><path d="M8 8h4M10 6v4" stroke="#333"/></svg></button>
        <button class="i" aria-label="Analytical model"><svg width="16" height="14" viewBox="0 0 16 14"><path d="M1 13V3l5-2h5v10M6 1v12M1 6h10M11 13V3" fill="none" stroke="#333"/><path d="M1 13V9h6v4" fill="none" stroke="#d22"/><circle cx="12" cy="5" r="3" fill="#fbc02d" stroke="#c77c00"/><path d="M12 8v4" stroke="#c77c00"/></svg></button>
        <button class="i" aria-label="Constraints"><svg width="16" height="14" viewBox="0 0 16 14"><path d="M1 0v14M15 0v6M1 3h14M4 1L1 3l3 2M12 1l3 2-3 2" fill="none" stroke="#333"/><path d="M8 8h7v5H8z" fill="#555"/><path d="M10 8V6h3v2" fill="none" stroke="#555"/></svg></button>
      </div>
      <div class="hscroll"><svg width="7" height="10" viewBox="0 0 7 10"><path d="M5.500 1.500L2 5l3.500 3.500" fill="none" stroke="#444" stroke-width="1.800"/></svg><i></i><svg width="7" height="10" viewBox="0 0 7 10"><path d="M1.500 1.500L5 5 1.500 8.500" fill="none" stroke="#444" stroke-width="1.800"/></svg></div>
      <svg class="grip" width="10" height="10" viewBox="0 0 10 10"><path d="M7 0h2v2H7zM4 4h2v2H4zM7 4h2v2H7zM1 8h2v2H1zM4 8h2v2H4zM7 8h2v2H7z" fill="#b8b8b8"/></svg>
    </div>
  </section>

  <aside class="props">
    <h2 class="dockhead">Properties<button class="i x" aria-label="Close properties"><svg width="9" height="9" viewBox="0 0 9 9"><path d="M1 1l7 7M8 1L1 8" stroke="#000" stroke-width="1.800"/></svg></button></h2>
    <div class="pbody">
      <button class="typesel"><span class="thumb"><svg width="30" height="28" viewBox="0 0 30 28"><path d="M15 1l15 15H0z" fill="#333b48"/><path d="M7.500 12.500h15v14h-15z" fill="#e8ebf2" stroke="#333b48"/></svg></span><span>Elevation<br>Building Elevation</span><span class="caret big"></span></button>
      <div class="inst">
        <span class="selwrap"><select aria-label="Instance"><option>Elevation: West_detailingV.2</option></select><svg width="9" height="6" viewBox="0 0 9 6"><path d="M.5 1l4 4 4-4" fill="none" stroke="#555"/></svg></span>
        <button class="i edittype"><svg width="16" height="16" viewBox="0 0 16 16"><path d="M1 2l2-1h4v6H1zM9 2l2-1h4v6M1 9h6v6H1z" fill="#f5f5f5" stroke="#667"/><path d="M9 6h6v9H9z" fill="#fff" stroke="#333"/><path d="M10.500 8h3v2h-3z" fill="#2a7cc0"/><path d="M10 12h4" stroke="#333"/></svg>Edit Type</button>
      </div>
      <table>
        <colgroup><col class="c1"><col><col class="c3"></colgroup>
        <tr class="g"><th colspan="2">Graphics</th><th><button class="fold" aria-label="Collapse group"><svg width="7" height="8" viewBox="0 0 7 8"><path d="M1 4l2.500-3L6 4M1 7.500l2.500-3 2.500 3" fill="none" stroke="#000" stroke-width="1.300"/></svg></button></th></tr>
        <tr><td><label for="vs">View Scale</label></td><td class="ctl"><input id="vs" type="text" value="1 : 50"></td><td></td></tr>
        <tr class="ro"><td class="split"><div><span>Scale Value</span><span>1:</span></div></td><td>50</td><td></td></tr>
        <tr><td>Display Model</td><td>Normal</td><td></td></tr>
        <tr><td>Detail Level</td><td>Fine</td><td></td></tr>
        <tr><td>Parts Visibility</td><td>Show Original</td><td></td></tr>
        <tr><td>Visibility/Gra...</td><td class="ctl"><button>Edit...</button></td><td></td></tr>
        <tr><td>Graphic Displ...</td><td class="ctl"><button>Edit...</button></td><td></td></tr>
        <tr><td>Hide at scale...</td><td>&nbsp;1 : 5000</td><td></td></tr>
        <tr><td>Discipline</td><td>Architectural</td><td></td></tr>
        <tr><td>Show Hidden...</td><td>By Discipline</td><td></td></tr>
        <tr><td>Color Schem...</td><td>Background</td><td></td></tr>
        <tr><td>Color Scheme</td><td class="ctl"><button>&lt;none&gt;</button></td><td></td></tr>
        <tr><td>Default Analy...</td><td>None</td><td></td></tr>
        <tr class="ro"><td>Reference La...</td><td></td><td></td></tr>
        <tr class="g"><th colspan="2">Extents</th><th><button class="fold" aria-label="Collapse group"><svg width="7" height="8" viewBox="0 0 7 8"><path d="M1 4l2.500-3L6 4M1 7.500l2.500-3 2.500 3" fill="none" stroke="#000" stroke-width="1.300"/></svg></button></th></tr>
        <tr><td><label for="cv">Crop View</label></td><td><input id="cv" type="checkbox"></td><td></td></tr>
        <tr><td><label for="cr">Crop Region ...</label></td><td><input id="cr" type="checkbox"></td><td></td></tr>
        <tr><td><label for="ac">Annotation C...</label></td><td><input id="ac" type="checkbox"></td><td></td></tr>
        <tr><td>Far Clipping</td><td class="ctl"><button>No clip</button></td><td></td></tr>
        <tr class="ro"><td>Far Clip Offset</td><td>27108.4</td><td></td></tr>
        <tr><td>Scope Box</td><td>None</td><td></td></tr>
        <tr><td>Associated D...</td><td>None</td><td></td></tr>
        <tr class="g"><th colspan="2">Identity Data</th><th><button class="fold" aria-label="Collapse group"><svg width="7" height="8" viewBox="0 0 7 8"><path d="M1 4l2.500-3L6 4M1 7.500l2.500-3 2.500 3" fill="none" stroke="#000" stroke-width="1.300"/></svg></button></th></tr>
        <tr><td>View Template</td><td class="ctl"><button>&lt;None&gt;</button></td><td></td></tr>
        <tr><td>View Name</td><td>West_detailingV.2</td><td></td></tr>
        <tr class="ro"><td>Dependency</td><td>Independent</td><td></td></tr>
        <tr><td>Title on Sheet</td><td>Front section view</td><td></td></tr>
        <tr class="ro"><td>Referencing ...</td><td></td><td></td></tr>
        <tr class="ro"><td>Referencing ...</td><td></td><td></td></tr>
        <tr class="g"><th colspan="2">Phasing</th><th><button class="fold" aria-label="Collapse group"><svg width="7" height="8" viewBox="0 0 7 8"><path d="M1 4l2.500-3L6 4M1 7.500l2.500-3 2.500 3" fill="none" stroke="#000" stroke-width="1.300"/></svg></button></th></tr>
        <tr><td>Phase Filter</td><td>Show All</td><td></td></tr>
        <tr><td>Phase</td><td>New Construction</td><td></td></tr>
      </table>
      <div class="pfoot"><a href="#help">Properties help</a><button disabled>Apply</button></div>
    </div>
  </aside>
</main>

<footer class="status">
  <span class="hint">Click to select, TAB for alternates, CTRL adds, SHIFT unselects.</span>
  <div class="midtools">
    <button class="i cell" aria-label="Worksets"><svg width="16" height="16" viewBox="0 0 16 16"><path d="M2 8h5v6H2zM9 8h5v6H9zM5 2h6v5H5z" fill="#ddd" stroke="#888"/></svg></button>
    <span class="selwrap ws"><select aria-label="Active workset"><option></option></select><svg width="9" height="6" viewBox="0 0 9 6"><path d="M.5 1l4 4 4-4" fill="none" stroke="#999"/></svg></span>
    <button class="i cell req"><svg width="16" height="16" viewBox="0 0 16 16"><path d="M5 2h9v4H8l-4 9H1l3-7z" fill="#bbb" stroke="#999"/></svg>:0</button>
    <button class="i cell" aria-label="Design options"><svg width="16" height="16" viewBox="0 0 16 16"><path d="M1 1h14v14H1z" fill="#fff" stroke="#333a44" stroke-width="1.500"/><path d="M1 3h14" stroke="#333a44" stroke-width="3"/><path d="M4 7h2v2H4zM4 11h2v2H4z" fill="#333"/><path d="M8 8h5M8 12h5" stroke="#333"/></svg></button>
    <button class="i cell" aria-label="Add to set"><svg width="16" height="16" viewBox="0 0 16 16"><path d="M2 2h12v12H2z" fill="#aaa"/><path d="M3 14l5-5M5 8h4v4" stroke="#eee" fill="none"/></svg></button>
    <span class="selwrap mm"><select aria-label="Design option"><option>Main Model</option></select><svg width="9" height="6" viewBox="0 0 9 6"><path d="M.5 1l4 4 4-4" fill="none" stroke="#999"/></svg></span>
  </div>
  <div class="righttools">
    <button class="i cell" aria-label="Select links"><svg width="18" height="18" viewBox="0 0 18 18"><path d="M1 3h6v4H1zM9 3h6v4H9zM5 5h6" fill="none" stroke="#d89410" stroke-width="2"/><path class="cur" d="M8 6v9l2-2 2 4 2-1-2-3h3z"/></svg></button>
    <button class="i cell" aria-label="Select underlay"><svg width="18" height="18" viewBox="0 0 18 18"><path d="M1 13h8M1 13l8-9M3 10h6" stroke="#2a7cc0" fill="none" stroke-width="1.500"/><path d="M10 1l6 6M16 1l-6 6" stroke="#d22" stroke-width="2"/><path class="cur" d="M10 7v9l2-2 2 4 2-1-2-3h3z"/></svg></button>
    <button class="i cell" aria-label="Select pinned"><svg width="18" height="18" viewBox="0 0 18 18"><path d="M2 1h9v2H9v4h3v3H1V7h3V3H2z" fill="#f39a3c" stroke="#a0520a"/><path d="M6 10v7" stroke="#555"/><path class="cur" d="M9 7v9l2-2 2 4 2-1-2-3h3z"/></svg></button>
    <button class="i cell" aria-label="Select by face"><svg width="18" height="18" viewBox="0 0 18 18"><path d="M2 3l8-2v12l-8 3z" fill="#9fd2f5" stroke="#2a7cc0"/><path class="cur" d="M9 7v9l2-2 2 4 2-1-2-3h3z"/></svg></button>
    <button class="i cell" aria-label="Drag on selection"><svg width="18" height="18" viewBox="0 0 18 18"><path d="M6 0v11M0 5.500h12M4 2l2-2 2 2M4 9l2 2 2-2" fill="none" stroke="#222" stroke-width="1.300"/><path class="cur" d="M10 7v9l2-2 2 4 2-1-2-3h3z"/></svg></button>
    <button class="i cell" aria-label="Background processes"><svg width="18" height="18" viewBox="0 0 18 18"><circle cx="9" cy="9" r="5" fill="none" stroke="#aaa" stroke-width="3" stroke-dasharray="3 1"/></svg></button>
    <button class="i filt"><svg width="18" height="16" viewBox="0 0 18 16"><path d="M1 1h16l-6 7v7l-4-3V8z" fill="#b9c0c8" stroke="#444b55"/></svg>:0</button>
  </div>
</footer>

<nav class="taskbar">
  <button class="start" aria-label="Start"><svg width="16" height="16" viewBox="0 0 16 16"><path d="M0 2l7-1v6.500H0zM8 1l8-1v7.500H8zM0 8.500h7V15l-7-1zM8 8.500h8V16l-8-1z" fill="#fff"/></svg></button>
  <label class="tsearch"><svg width="22" height="22" viewBox="0 0 22 22"><circle cx="11" cy="11" r="8.500" fill="none" stroke="#fff" stroke-width="2.500"/></svg><input type="text" placeholder="Type here to search"><svg width="12" height="18" viewBox="0 0 12 18"><rect x="3.500" y=".5" width="5" height="10" rx="2.500" fill="none" stroke="#aaa"/><path d="M.5 8v5h11V8M6 13v4M3 17h6" fill="none" stroke="#aaa"/></svg></label>
  <div class="tasks">
    <button aria-label="Task view"><svg width="22" height="16" viewBox="0 0 22 16"><path d="M5.500 1.500h11v13h-11zM3 3.500H.5v9H3M19 3.500h2.500v9H19" fill="none" stroke="#fff" stroke-width="1.200"/></svg></button>
    <button class="run" aria-label="File Explorer"><svg width="24" height="20" viewBox="0 0 24 20"><path d="M1 1h8l2 2h12v16H1z" fill="#f6d36b"/><path d="M1 6h22v13H1z" fill="#fde9a0"/><path d="M4 11h16v8h-4v-4H8v4H4z" fill="#35a4e0"/></svg></button>
    <button aria-label="Store"><svg width="22" height="24" viewBox="0 0 22 24"><path d="M1 7l20-2v18L1 21z" fill="#fff"/><path d="M6 7c0-8 9-8 10 0" fill="none" stroke="#fff" stroke-width="1.500"/><path d="M6 10l4-.5V14H6zM11 9.500l5-.5v5h-5zM6 15h4v4l-4-.5zM11 15h5v5l-5-.5z" fill="#111"/></svg></button>
    <button aria-label="Firefox"><svg width="24" height="24" viewBox="0 0 24 24"><circle cx="12" cy="12" r="11" fill="#e66000"/><circle cx="13" cy="9" r="7" fill="#2f5fa8"/><path d="M2 5c3 2 6 2 8 4-3 0-3 3 0 5 4 2 7 0 9-2 1 6-4 9-9 8C3 19 0 12 2 5z" fill="#ff9a1f"/></svg></button>
    <button class="run" aria-label="Messenger"><svg width="24" height="24" viewBox="0 0 24 24"><path d="M0 0h24v24H0z" fill="#0084ff"/><path d="M12 6c-8 0-8 10-3 11v3l3-3c8 0 8-11 0-11z" fill="#fff"/><path d="M8 13l3-3 2 2 3-2-3 3-2-2z" stroke="#0084ff" fill="none"/></svg></button>
    <button class="run" aria-label="Edge"><svg width="24" height="24" viewBox="0 0 24 24"><path d="M2 11C3 2 20-2 22 10v3H8c0 6 8 7 12 4v5C12 26 1 22 4 14c1-3 4-5 6-5-1 1-2 2-2 2h8c0-7-11-6-14 0z" fill="#1a7fdc"/></svg></button>
    <button class="run" aria-label="Chrome"><svg width="24" height="24" viewBox="0 0 24 24"><circle cx="12" cy="12" r="11" fill="#fbc116"/><path d="M12 12L2.500 6.500a11 11 0 0 1 19 0z" fill="#e33b2e"/><path d="M12 12L2.500 6.500A11 11 0 0 0 11 23z" fill="#2da94f"/><circle cx="12" cy="12" r="5.500" fill="#fff"/><circle cx="12" cy="12" r="4.300" fill="#4285f4"/></svg></button>
    <button class="run" aria-label="Spotify"><svg width="24" height="24" viewBox="0 0 24 24"><circle cx="12" cy="12" r="11" fill="#1ed760"/><path d="M5 8c5-1 10-1 14 1.500M6 12c4-1 8-1 12 1.500M7 16c3-1 6-1 9 1" fill="none" stroke="#111" stroke-width="2"/></svg></button>
    <button class="run" aria-label="Mail"><svg width="24" height="22" viewBox="0 0 24 22"><path d="M0 7l12-7 12 7v14H0z" fill="#fff"/><path d="M3 7h18l-9 6zM12 13l5 5" fill="#111" stroke="#111"/></svg></button>
    <button class="run cur-app" aria-label="Revit"><span class="rtile">R</span></button>
  </div>
  <div class="tray">
    <button class="i" aria-label="Hidden icons"><svg width="12" height="8" viewBox="0 0 12 8"><path d="M1 7l5-5 5 5" fill="none" stroke="#fff" stroke-width="1.200"/></svg></button>
    <button class="i" aria-label="Network"><svg width="17" height="16" viewBox="0 0 17 16"><path d="M5.500 2.500h10v7h-10zM10 10v4M6 14.500h8M.5 1.500h3v4h-3zM2 6v7h4" fill="none" stroke="#fff"/></svg></button>
    <button class="i" aria-label="Volume"><svg width="17" height="14" viewBox="0 0 17 14"><path d="M.5 5h3l4-4v12l-4-4h-3zM9.500 5v4M11.500 3c2 3 2 5 0 8" fill="none" stroke="#fff"/><path d="M14 1c3 4 3 8 0 12" fill="none" stroke="#888"/></svg></button>
    <button class="i lang">ENG</button>
    <button class="i clock">2:55 PM<br>22-Sep-17</button>
    <button class="i notif" aria-label="Notifications"><svg width="17" height="18" viewBox="0 0 17 18"><path d="M1 1.500h15v12h-5L8.500 16 6 13.500H1z" fill="none" stroke="#fff" stroke-width="1.300"/></svg></button>
  </div>
</nav>
</div>
</body>
</html>
```
FILE: styles.css
```css
* { box-sizing: border-box; }
body { margin: 0; font: 11px/18px "Noto Sans", "Open Sans", sans-serif; color: #000; background: #f0f0f0; }
button, input, select { font: inherit; color: inherit; margin: 0; }
button { cursor: default; }
h2, ul { margin: 0; padding: 0; font-size: inherit; font-weight: 400; }
svg { flex: none; display: block; }
.app { min-height: 100vh; display: flex; flex-direction: column; }
.i { border: 0; padding: 0; background: none; display: flex; align-items: center; justify-content: center; }
.on { background: #b5d5f3; border: 1px solid #1a72c8; }
.caret { flex: none; border: 3px solid transparent; border-top: 4px solid #3a3a3a; border-bottom: 0; width: 0; height: 0; }
.caret.big { border-width: 4px 4px 0; }
.caret.dim { border-top-color: #888; }
.sep { width: 1px; height: 20px; background: #aaa; margin: 0 4px; }
.sep.tight { margin: 0 2px; }
.w10, .w14, .w20, .w24, .w26, .w28 { display: flex; align-items: center; justify-content: center; height: 22px; flex: none; }
.w10 { width: 10px; } .w14 { width: 14px; } .w20 { width: 20px; } .w24 { width: 24px; } .w26 { width: 26px; } .w28 { width: 28px; }

.top { display: flex; height: 44px; background: #a0a0a0; }
.appbtn { width: 41px; height: 41px; border: 1px solid #111; background: linear-gradient(#9a9a9a, #d0d0d0 10%, #909090); padding: 0; display: flex; align-items: center; justify-content: center; gap: 3px; }
.rlogo { font-size: 32px; line-height: 32px; font-weight: 800; color: #2a69b0; text-shadow: 1px 1px 0 #174a86; }
.topmain { flex: 1; min-width: 0; }
.titlebar { height: 24px; background: #fff; display: flex; }
.qat, .info { display: flex; align-items: center; height: 24px; background: linear-gradient(#e8e8e8, #b8b8b8); border: 1px solid #777; border-left: 0; flex: none; }
.qat { width: 450px; padding-left: 6px; }
.bigA { font-size: 19px; font-weight: 700; color: #333a44; }
.title { flex: 1; display: flex; justify-content: center; align-items: center; gap: 15px; white-space: pre; }
.info { width: 460px; border-left: 1px solid #777; }
.search { width: 179px; height: 22px; border: 1px solid #000; background: #fff; padding: 0 3px; font-style: italic; margin-right: 1px; }
.search::placeholder { color: #666; opacity: 1; }
.user { width: 118px; gap: 5px; padding: 0 4px; justify-content: flex-start; }
.user .caret { margin-left: auto; }
.winbtns { display: flex; width: 163px; padding: 0 2px 0 25px; }
.winbtns .i { flex: 1; height: 20px; }
.tabs { display: flex; height: 20px; padding-left: 5px; align-items: flex-end; gap: 1px; }
.tabs button { border: 0; background: none; padding: 0 10px; height: 18px; line-height: 16px; color: #222; display: flex; align-items: center; gap: 4px; }
.tabs .active { background: linear-gradient(#e8e8e8, #fff); border-top: 1px solid #fff; padding: 0 8px; }
.tabs .ribtoggle { padding-left: 18px; }

.ribbon { display: flex; height: 94px; padding-left: 2px; border-top: 1px solid #fff; background: linear-gradient(#e4e4e4, #b4b4b4); }
.panel { display: flex; flex-direction: column; background: linear-gradient(#fff, #f6f6f6); border-right: 1px solid #b0b0b0; color: #333; flex: none; border-left: 1px solid #fff; }
.body { height: 75px; padding-top: 2px; }
.label { height: 18px; line-height: 16px; background: #efefef; border-top: 1px solid #e0e0e0; padding-bottom: 2px; text-align: center; display: flex; justify-content: center; align-items: center; gap: 6px; }
.row { display: flex; }
.three { display: grid; grid-template-rows: repeat(3, 24px); }
.two { display: grid; grid-template-rows: repeat(2, 36px); }
.arrows { align-items: center; }
.p-select { width: 56px; } .p-props { width: 64px; } .p-clip { width: 80px; } .p-geom { width: 139px; }
.p-modify { width: 238px; } .p-view { width: 65px; } .p-measure { width: 56px; } .p-create { width: 80px; }
.tall { width: 44px; height: 72px; margin-left: 5px; padding: 8px 0 0; display: flex; flex-direction: column; align-items: center; gap: 6px; }
.p-props .body { justify-content: center; }
.p-props .i { width: 38px; height: 34px; }
.paste { width: 52px; border: 0; background: none; padding: 1px 0 0; display: flex; flex-direction: column; align-items: center; gap: 2px; }
.p-clip .body .three { width: 24px; }
.p-geom .body { padding-left: 6px; }
.texts { width: 69px; }
.texts .i { justify-content: flex-start; gap: 6px; }
.p-geom .three + .three, .p-view .three { width: 24px; }
.p-geom .body .arrows { width: 14px; justify-items: center; }
.p-view .body .arrows { width: 10px; justify-items: center; }
.p-view .three:last-child { width: 28px; }
.bigs { display: grid; grid-template: repeat(2, 36px) / repeat(4, 39px); margin-left: 1px; }
.p-create .bigs { grid-template: repeat(2, 36px) / repeat(2, 38px); }
.smalls { display: grid; grid-template: repeat(3, 24px) / repeat(3, 26px); }
.p-modify .smalls { margin-left: 1px; }
.p-measure .two { width: 40px; }
.p-measure .body .arrows { width: 10px; justify-items: center; }
.optbar { height: 28px; background: #e0e1e3; border-top: 1px solid #eee; }

.work { flex: 1; display: flex; min-height: 0; background: #f0f0f0; }
.dockhead { height: 18px; background: #bccbda; padding: 1px 2px 0 4px; display: flex; justify-content: space-between; align-items: center; white-space: nowrap; margin-bottom: 3px; }
.x { width: 15px; height: 16px; }
.browser { width: 259px; display: flex; flex-direction: column; margin-right: 4px; flex: none; }
.root { flex: 1; background: #fff; border: 1px solid #8a8a8a; border-top: 2px solid #777; border-right-color: #ddd; margin-bottom: 1px; }
.tree, .tree ul { list-style: none; }
.tree li { position: relative; }
.tree .tree { margin-left: 20px; }
.tree li::before { content: ""; position: absolute; left: 9px; top: 0; bottom: 0; border-left: 1px dotted #999; }
.tree li:last-child::before { bottom: auto; height: 9px; }
.root > li:first-child::before { top: 9px; }
.r { position: relative; height: 18px; line-height: 15px; padding-left: 27px; display: flex; align-items: flex-start; white-space: nowrap; }
.r::before { content: ""; position: absolute; left: 10px; top: 9px; width: 14px; border-top: 1px dotted #999; }
.r > svg { align-self: center; }
.root > li > .r { padding-left: 21px; gap: 3px; }
.root > li > .r::before { width: 10px; }
.r span { padding: 0 3px; height: 18px; }
.sel { background: #e2e2e2; }
.tg { position: absolute; left: 5px; top: 5px; width: 9px; height: 9px; border: 1px solid #888; background: linear-gradient(#2a4a9a, #2a4a9a) 1px 3px / 5px 1px no-repeat, linear-gradient(#2a4a9a, #2a4a9a) 3px 1px / 1px 5px no-repeat, #f6f6f6; padding: 0; }
.tg.minus { background: linear-gradient(#2a4a9a, #2a4a9a) 1px 3px / 5px 1px no-repeat, #f6f6f6; }

.viewport { flex: 1; min-width: 0; display: flex; flex-direction: column; border-left: 2px solid #666; border-top: 2px solid #666; }
.canvasrow { flex: 1; display: flex; min-height: 0; }
.canvas { flex: 1; min-width: 0; position: relative; background: #fff; overflow: hidden; }
.drawing { width: 100%; height: 100%; }
.drawing path { fill: none; stroke: #111; stroke-width: 1; }
.drawing pattern path { stroke: #666; }
.drawing .panels { fill: url(#hatch); stroke: #222; shape-rendering: crispEdges; }
.drawing .crisp { shape-rendering: crispEdges; }
.drawing .rail { stroke-width: 2.5; }
.mdi { position: absolute; right: 5px; top: 8px; display: flex; gap: 6px; }
.navbar { position: absolute; right: 1px; top: 28px; width: 36px; height: 118px; border: 2px solid #bbb; border-radius: 5px; background: rgba(235, 235, 235, .75); display: flex; flex-direction: column; align-items: center; justify-content: space-between; padding: 2px 0; }
.navbar hr { width: 26px; border: 0; border-top: 1px solid #bbb; margin: 0; }
.navbar .end { align-self: flex-end; margin-right: 1px; }
.vscroll { width: 16px; background: #f0f0f0; display: flex; flex-direction: column; align-items: center; justify-content: space-between; padding: 6px 0; }
.vscroll i { width: 15px; height: 17px; background: #cdcdcd; }
.viewctl { display: flex; align-items: center; height: 18px; }
.scale { width: 76px; padding-left: 5px; }
.vicons { display: flex; }
.vicons .i { width: 21px; }
.hscroll { flex: 1; height: 16px; display: flex; justify-content: space-between; align-items: center; padding: 0 3px 0 5px; }
.hscroll i { width: 17px; height: 15px; background: #cdcdcd; }
.grip { margin: 4px 2px 0 8px; }

.props { width: 230px; margin-left: 6px; flex: none; display: flex; flex-direction: column; }
.pbody { flex: 1; background: #fff; border-left: 2px solid #777; border-top: 2px solid #777; border-right: 1px solid #ddd; display: flex; flex-direction: column; margin-right: 1px; margin-bottom: 1px; }
.typesel { height: 72px; border: 1px solid #ccc; background: linear-gradient(#fff, #ececec); padding: 2px 0 2px 2px; display: flex; align-items: center; gap: 4px; text-align: left; line-height: 16px; color: #333; }
.thumb { width: 66px; height: 66px; border: 1px solid #ccc; display: flex; align-items: center; justify-content: center; }
.typesel .caret { margin-left: auto; }
.inst { display: flex; height: 24px; background: #f0f0f0; }
.selwrap { position: relative; display: flex; width: 143px; height: 22px; }
.selwrap select { appearance: none; width: 100%; border: 1px solid #aaa; background: #e2e2e2; padding: 0 18px 0 3px; border-radius: 0; opacity: 1; }
.selwrap svg { position: absolute; right: 4px; top: 9px; pointer-events: none; }
.edittype { flex: 1; gap: 5px; height: 20px; }
table { width: 100%; table-layout: fixed; border-spacing: 0; }
.c1 { width: 90px; } .c3 { width: 13px; }
th { height: 18px; line-height: 18px; padding: 0 2px; text-align: left; font-weight: 400; background: #dcdcdc; }
.fold { display: block; border: 0; background: none; padding: 0; width: 7px; height: 8px; }
td { height: 18px; line-height: 15px; vertical-align: top; padding: 0 0 0 2px; border-bottom: 1px dotted #777; border-right: 1px dotted #777; white-space: nowrap; overflow: hidden; }
td:first-child { padding-left: 8px; }
.ro { color: #777; }
.split div { display: flex; justify-content: space-between; padding-right: 1px; }
td.ctl { padding: 0; }
.ctl input, .ctl button { display: block; width: 100%; height: 17px; line-height: 13px; padding: 0 4px; }
.ctl input { border: 1px solid #000; background: #fff; }
.ctl button { border: 1px solid #aaa; border-bottom-width: 2px; border-right-width: 2px; background: #e1e1e1; }
input[type=checkbox] { appearance: none; display: block; width: 13px; height: 13px; border: 1px solid #222; background: #fff; margin: 3px 0 0 1px; }
.pfoot { margin-top: auto; height: 26px; background: #f0f0f0; display: flex; justify-content: space-between; align-items: center; padding: 0 2px; }
.pfoot a { color: #0a63c2; }
.pfoot button { width: 73px; height: 21px; border: 1px solid #bbb; background: #ccc; color: #888; padding: 0; }

.status { height: 25px; border-top: 2px solid #888; background: linear-gradient(#e6e6e6, #c4c4c4); display: grid; grid-template-columns: 1fr 500px 469px; align-items: center; }
.hint { padding-left: 2px; white-space: nowrap; }
.midtools, .righttools { display: flex; align-items: center; gap: 2px; height: 23px; }
.cell { width: 24px; height: 21px; background: #e8e8e8; }
.req { width: 50px; gap: 5px; margin-right: 4px; }
.status .selwrap select { background: #fff; border-color: #ddd; color: #777; }
.ws { width: 206px; } .mm { width: 156px; }
.righttools { justify-content: flex-end; padding-right: 63px; }
.filt { width: 32px; }
.cur { fill: #fff; stroke: #222; }

.taskbar { height: 40px; display: flex; color: #fff; background: linear-gradient(60deg, transparent 68%, #2a2212 71%, #1c140c 73%, transparent 76%), linear-gradient(90deg, #070405 30%, #1a0d0b 43%, #1d100e 50%, #0c0606 58%, #180c0a 70%, #0a0606 80%, #060405); }
.start { width: 48px; border: 0; background: #2a2317; display: flex; align-items: center; justify-content: center; padding: 0; }
.tsearch { width: 344px; background: #343434; display: flex; align-items: center; gap: 9px; padding: 0 15px 0 9px; }
.tsearch input { flex: 1; min-width: 0; border: 0; background: none; padding: 0; font-size: 14px; height: 30px; }
.tsearch input::placeholder { color: #aaa; opacity: 1; }
.tasks { display: flex; padding-left: 1px; }
.tasks button { width: 41px; margin: 0 4px; border: 0; background: none; padding: 3px 0 0; display: flex; align-items: center; justify-content: center; border-bottom: 3px solid transparent; }
.tasks .run { border-bottom-color: #76b9ed; }
.tasks .cur-app { background: #3c3a3b; width: 49px; margin: 0; }
.rtile { width: 24px; height: 24px; background: #cfe2f3; color: #1f5a9c; font-size: 20px; line-height: 24px; font-weight: 800; }
.tray { margin-left: auto; display: flex; align-items: center; padding-right: 9px; }
.tray .i { width: 24px; height: 40px; }
.tray .lang { width: 40px; }
.tray .clock { width: 58px; display: block; text-align: center; }
.tray .notif { width: 48px; }
```
